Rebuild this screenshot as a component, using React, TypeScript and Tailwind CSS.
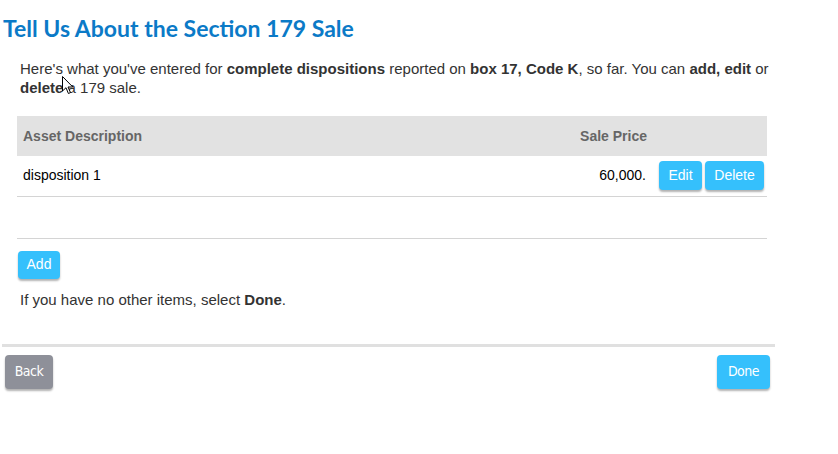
import React from 'react';

const rows = [{ id: 1, description: 'disposition 1', price: '60,000.' }];

function Cursor() {
  return (
    <svg
      className="absolute left-[62px] top-[76px] pointer-events-none"
      width="12"
      height="19"
      viewBox="0 0 12 19"
    >
      <path
        d="M0.5 0.5 L0.5 15 L4 11.7 L6.4 17.5 L8.5 16.6 L6 11 L10.8 11 Z"
        fill="#fff"
        stroke="#000"
        strokeWidth="1"
        strokeLinejoin="round"
      />
    </svg>
  );
}

export default function App() {
  const btn =
    'bg-[#35c0fc] text-white rounded-[4px] shadow-[0_2px_2px_rgba(0,0,0,0.3)] font-["Liberation_Sans",Arial,sans-serif] text-[14px]';

  return (
    <div className="relative w-[838px] h-[454px] bg-white font-['Liberation_Sans',Arial,sans-serif] text-[14px] text-[#333]">
      <Cursor />
      <div className="w-[776px]">
        <h1 className="pl-[3px] pt-[14px] font-['Lato',sans-serif] font-bold text-[23px] leading-[28px] text-[#0b7ac7]">
          Tell Us About the Section 179 Sale
        </h1>

        <div className="pl-[17px] w-[767px]">
          <p className="pl-[3px] mt-[17px] w-[758px] text-[15px] leading-[19px]">
            Here's what you've entered for <b>complete dispositions</b> reported on{' '}
            <b>box 17, Code K</b>, so far. You can <b>add, edit</b> or <b>delete</b> a 179 sale.
          </p>

          <table className="mt-[19px] w-[750px] border-collapse">
            <thead>
              <tr className="bg-[#e2e2e2] h-[40px] text-[#666] font-bold">
                <th className="text-left pl-[6px]">Asset Description</th>
                <th className="text-right pr-[6px]">Sale Price</th>
                <th className="w-[114px]"></th>
              </tr>
            </thead>
            <tbody>
              {rows.map((r) => (
                <tr key={r.id} className="h-[40px] border-b border-[#d4d4d4] text-black">
                  <td className="pl-[6px]">{r.description}</td>
                  <td className="text-right pr-[7px]">{r.price}</td>
                  <td className="pl-[6px]">
                    <div className="flex gap-[3px] pb-[1px]">
                      <button className={`${btn} h-[29px] w-[43px]`}>Edit</button>
                      <button className={`${btn} h-[29px] w-[59px]`}>Delete</button>
                    </div>
                  </td>
                </tr>
              ))}
            </tbody>
          </table>

          <div className="mt-[41px] w-[750px] border-t border-[#d4d4d4]" />

          <button className={`${btn} mt-[12px] h-[28px] w-[42px] ml-[1px]`}>Add</button>

          <p className="pl-[3px] mt-[11px] text-[15px] leading-[19px]">
            If you have no other items, select <b>Done</b>.
          </p>
        </div>

        <div className="ml-[2px] mt-[35px] w-[773px] border-t-[3px] border-[#e0e0e0]" />

        <div className="flex justify-between pl-[5px] pr-[6px] mt-[8px]">
          <button className="h-[34px] w-[48px] rounded-[4px] bg-[#8e9099] text-white text-[14px] font-['DejaVu_Sans_Condensed','DejaVu_Sans',sans-serif] tracking-[-0.5px] shadow-[0_2px_2px_rgba(0,0,0,0.3)]">
            Back
          </button>
          <button className="h-[34px] w-[53px] rounded-[4px] bg-[#35c0fc] text-white text-[14px] font-['DejaVu_Sans_Condensed','DejaVu_Sans',sans-serif] tracking-[-0.5px] shadow-[0_2px_2px_rgba(0,0,0,0.3)]">
            Done
          </button>
        </div>
      </div>
    </div>
  );
}
